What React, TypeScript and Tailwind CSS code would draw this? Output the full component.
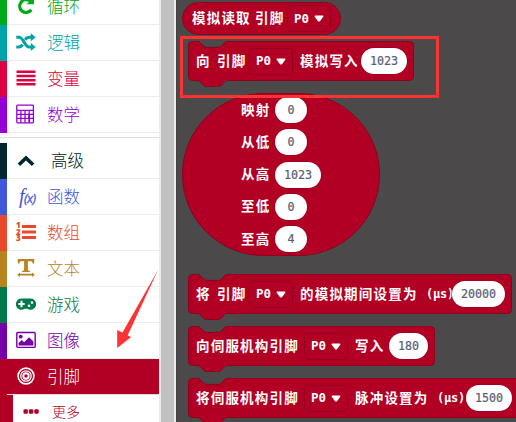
import React from "react";

const sans = "font-['Noto_Sans_CJK_SC',sans-serif]";
const mono = "font-['DejaVu_Sans_Mono','Noto_Sans_CJK_SC',monospace]";

const glyph = "block h-5 w-5 overflow-visible";

function LoopIcon() {
  return (
    <svg className={glyph} viewBox="0 0 20 20" fill="none" stroke="currentColor" strokeWidth="3.2">
      <path d="M15 6A6.400 6.400 0 1 0 15.300 13.800" />
      <path d="M18 .8v7.400h-7.400z" fill="currentColor" stroke="none" />
    </svg>
  );
}
function ShuffleIcon() {
  return (
    <svg className={glyph} viewBox="0 0 20 20" fill="none" stroke="currentColor" strokeWidth="3">
      <path d="M.3 5.200h2.500c5.300 0 5.500 9.800 10.500 9.800h3M.3 15h2.500c2 0 3-1.200 3.800-2.500M9.300 7.700c.8-1.500 2-2.500 4-2.500h3" />
      <path d="M14.800 1.200l4.900 4-4.900 4zM14.800 11l4.900 4-4.900 4z" fill="currentColor" stroke="none" />
    </svg>
  );
}
function LinesIcon() {
  return (
    <svg className={glyph} viewBox="0 0 20 20" fill="currentColor">
      <path d="M.5 2.500h19V5H.5zM.5 6.700h19v2.500H.5zM.5 10.900h19v2.500H.5zM.5 15h19v2.500H.5z" />
    </svg>
  );
}
function TableIcon() {
  return (
    <svg className={glyph} viewBox="0 0 20 20" fill="none" stroke="currentColor" strokeWidth="1.300">
      <rect x=".8" y="1.200" width="16.600" height="17.600" rx=".8" />
      <path d="M1 6.300h16.500M4.900 6.300v12.500M9 6.300v12.500M13.200 6.300v8M1 10.300h16.500M1 14.400h16.500" />
      <path d="M13.200 10.300v8.500" strokeWidth="1.800" />
    </svg>
  );
}
function ChevronIcon() {
  return (
    <svg className={glyph} viewBox="0 0 20 20" fill="none" stroke="currentColor" strokeWidth="3.600">
      <path d="M2.900 14.800L10 8l7.100 6.800" />
    </svg>
  );
}
function FunctionIcon() {
  return (
    <span className="flex h-5 w-5 items-baseline font-['Open_Sans',sans-serif] italic leading-5 whitespace-nowrap">
      <span className="ml-[3px] w-[5px] font-['Liberation_Serif',serif] text-[20px]">f</span>
      <span className="text-[12.500px] tracking-[-0.500px] [-webkit-text-stroke:0.300px]">(x)</span>
    </span>
  );
}
function ListIcon() {
  return (
    <span className="flex h-5 w-5 items-center gap-[1px]">
      <span className="flex w-[5px] flex-col font-['Open_Sans',sans-serif] text-[8px] font-extrabold">
        <span className="h-[6.500px] leading-[6.500px]">1</span>
        <span className="h-[6.500px] leading-[6.500px]">2</span>
        <span className="h-[6.500px] leading-[6.500px]">3</span>
      </span>
      <svg className="h-5 w-[14px]" viewBox="0 0 14 20" fill="currentColor">
        <path d="M0 3h14v3H0zM0 8.500h14v3H0zM0 14h14v3H0z" />
      </svg>
    </span>
  );
}
function TextIcon() {
  return (
    <svg className={glyph} viewBox="0 0 20 20" fill="currentColor">
      <path d="M1.800 1h16.400v4.600h-1.500c-.2-1.800-.8-2.400-2.500-2.400h-2.300v8.300c0 1 .4 1.200 2 1.300v1.200H6.100v-1.200c1.600-.1 2-.3 2-1.300V3.200H5.800c-1.700 0-2.300.6-2.500 2.400H1.800z" />
      <path d="M4 15.800h12v-1.400l2.800 2.300L16 19v-1.400H4V19l-2.800-2.300L4 14.400z" />
    </svg>
  );
}
function GamepadIcon() {
  return (
    <svg className={glyph} viewBox="0 0 20 20">
      <path d="M5.600 4.600h8.800a5.600 5.600 0 1 1-3 10.200H8.600a5.600 5.600 0 1 1-3-10.200z" fill="currentColor" />
      <path d="M4.500 6.800h2v2.200h2.200v2H6.500v2.200h-2V11H2.300V9h2.200z" fill="white" />
      <circle cx="13" cy="11.700" r="1.300" fill="white" />
      <circle cx="16" cy="8.600" r="1.300" fill="white" />
    </svg>
  );
}
function ImageIcon() {
  return (
    <svg className={glyph} viewBox="0 0 20 20">
      <rect x=".8" y="2.500" width="18.400" height="14.900" rx="1" fill="none" stroke="currentColor" strokeWidth="1.400" />
      <circle cx="4.700" cy="6.700" r="1.900" fill="currentColor" />
      <path d="M2.600 15.600v-2.500l3.200-3.100 2.300 2.200 5-5 4.300 4.300v4.100z" fill="currentColor" />
    </svg>
  );
}
function TargetIcon() {
  return (
    <svg className={glyph} viewBox="0 0 20 20" fill="none" stroke="currentColor">
      <circle cx="10" cy="10" r="7.900" strokeWidth="1.600" />
      <circle cx="10" cy="10" r="5.200" strokeWidth="1.300" />
      <circle cx="10" cy="10" r="2.700" strokeWidth="1.900" />
    </svg>
  );
}

type Category = { name: string; Icon: () => React.JSX.Element; strip: string; ink: string; pad?: string };

const basic: Category[] = [
  { name: "循环", Icon: LoopIcon, strip: "bg-[#00aa18]", ink: "text-[#00aa18]" },
  { name: "逻辑", Icon: ShuffleIcon, strip: "bg-[#00a4a6]", ink: "text-[#00a4a6]" },
  { name: "变量", Icon: LinesIcon, strip: "bg-[#dc0040]", ink: "text-[#dc0040]" },
  { name: "数学", Icon: TableIcon, strip: "bg-[#9400d3]", ink: "text-[#9400d3]" },
];

const advanced: Category[] = [
  { name: "高级", Icon: ChevronIcon, strip: "bg-[#00272b]", ink: "text-[#00272b]", pad: "ml-[15px]" },
  { name: "函数", Icon: FunctionIcon, strip: "bg-[#3f57d9]", ink: "text-[#3f57d9]" },
  { name: "数组", Icon: ListIcon, strip: "bg-[#e8492b]", ink: "text-[#e8492b]" },
  { name: "文本", Icon: TextIcon, strip: "bg-[#b8841f]", ink: "text-[#b8841f]" },
  { name: "游戏", Icon: GamepadIcon, strip: "bg-[#007a4b]", ink: "text-[#007a4b]" },
  { name: "图像", Icon: ImageIcon, strip: "bg-[#7600a8]", ink: "text-[#7600a8]" },
];

function CategoryRow({ name, Icon, strip, ink, pad = "ml-[11px]" }: Category) {
  return (
    <div className="flex h-9 shrink-0">
      <div className={`w-[7px] ${strip}`} />
      <div className={`flex flex-1 items-center border-b border-[#e9eeee] pb-px pl-[9px] ${ink}`}>
        <Icon />
        <span className={`${pad} pb-px text-[16.500px] font-light leading-5`}>{name}</span>
      </div>
    </div>
  );
}

function Sidebar() {
  return (
    <nav className={`flex h-[422px] w-[159px] shrink-0 flex-col overflow-hidden bg-white ${sans}`}>
      <div className="-mt-[11px] flex shrink-0 flex-col">
        {basic.map((c) => (
          <CategoryRow key={c.name} {...c} />
        ))}
      </div>
      <div className="h-[5px] shrink-0 border-b border-[#dedede]" />
      <div className="mt-[5px] flex shrink-0 flex-col">
        {advanced.map((c) => (
          <CategoryRow key={c.name} {...c} />
        ))}
      </div>
      <div className="flex h-[35px] shrink-0 items-center bg-[#b20024] pb-px pl-4 text-white">
        <TargetIcon />
        <span className="ml-[11px] pb-px text-[16.500px] font-light leading-5">引脚</span>
      </div>
      <div className="flex h-9 shrink-0">
        <div className="w-[7px] bg-[#b20024]" />
        <div className="flex flex-1 border-t border-[#d9d9d9] text-[#b20024]">
          <div className="w-[6px] bg-[#b20024]" />
          <svg className="ml-[10px] mt-[14px] h-[5px] w-4" viewBox="0 0 16 5" fill="currentColor">
            <rect x=".5" y=".3" width="4.400" height="4.400" rx="1.200" />
            <rect x="5.900" y=".3" width="4.400" height="4.400" rx="1.200" />
            <rect x="11.300" y=".3" width="4.400" height="4.400" rx="1.200" />
          </svg>
          <span className="ml-[13px] mt-[6px] text-[14px] font-light leading-5">更多</span>
        </div>
      </div>
    </nav>
  );
}

function Label({ children, className }: { children: string; className: string }) {
  return (
    <span className={`shrink-0 whitespace-nowrap pb-px text-[13.500px] font-bold leading-5 tracking-[1.200px] text-white ${className}`}>
      {children}
    </span>
  );
}

function Unit({ className }: { className: string }) {
  return (
    <span className={`shrink-0 whitespace-nowrap text-[12px] font-bold leading-5 tracking-[-0.200px] text-white ${className}`}>(µs)</span>
  );
}

function Dropdown({ className = "" }: { className?: string }) {
  return (
    <span className={`flex h-[27px] w-[44px] shrink-0 items-center rounded-[4px] border border-[#96001e] pl-[6px] text-white ${className}`}>
      <span className="w-[15px] text-[12.500px] font-bold leading-5">P0</span>
      <svg className="ml-[5px] h-[7px] w-[10px]" viewBox="0 0 10 7" fill="currentColor">
        <path d="M1.500.4h7q1.600.2.600 1.600L6.100 5.900Q5 7.200 3.900 5.900L.9 2Q-.1.600 1.500.4z" />
      </svg>
    </span>
  );
}

function Value({ children, className }: { children: string; className: string }) {
  return (
    <span className={`flex h-[26px] shrink-0 items-center justify-center rounded-full bg-white text-[11.700px] leading-5 text-[#575e75] ring-[0.500px] ring-[#8e001d] [-webkit-text-stroke:0.200px] ${className}`}>
      {children}
    </span>
  );
}

function Statement({ width, className = "", children }: { width: number; className?: string; children: React.ReactNode }) {
  const w = width - 0.5;
  const outline = `M.5 4.500q0-4 4-4h5q1.500 0 2.700 1.200l3.500 3.500q1.200 1.200 2.700 1.200h12q1.500 0 2.700-1.200l3.500-3.500q1.200-1.200 2.700-1.200H${w - 4}q4 0 4 4V35.500q0 4-4 4H39.300q-1.500 0-2.700 1.200l-3.500 3.500q-1.200 1.200-2.700 1.200h-12q-1.500 0-2.700-1.200l-3.500-3.500q-1.200-1.200-2.700-1.200h-5q-4 0-4-4z`;
  return (
    <div className={`relative ml-[6px] h-[40px] shrink-0 ${className}`} style={{ width }}>
      <svg className="absolute inset-0 h-[46px] w-full overflow-visible" fill="#b20024" stroke="#8e001d">
        <path d={outline} />
      </svg>
      <div className="relative flex h-[40px] items-center">{children}</div>
    </div>
  );
}

const mapping = [
  ["映射", "0"],
  ["从低", "0"],
  ["从高", "1023"],
  ["至低", "0"],
  ["至高", "4"],
];

function Canvas() {
  return (
    <main className={`relative flex h-[422px] w-[340px] shrink-0 flex-col overflow-hidden border-l border-[#424040] bg-[#4b4949] pl-[5px] ${mono}`}>
      <div className="mt-[2px] flex h-[33px] w-[159px] shrink-0 items-center rounded-full border border-[#8e001d] bg-[#b20024]">
        <Label className="ml-[9px] w-[63px]">模拟读取</Label>
        <Label className="w-[32px]">引脚</Label>
        <Dropdown />
      </div>

      <Statement width={226} className="mt-[6px]">
        <Label className="ml-[8px] w-[21px]">向</Label>
        <Label className="w-[32px]">引脚</Label>
        <Dropdown />
        <Label className="ml-[7px] w-[61px]">模拟写入</Label>
        <Value className="w-[46px]">1023</Value>
      </Statement>

      <div className="mt-[12px] flex h-[163px] w-[198px] shrink-0 flex-col gap-[6.300px] rounded-[81.500px] border border-[#8e001d] bg-[#b20024] pt-[3px]">
        {mapping.map(([label, value]) => (
          <div key={label} className="flex h-[26px] items-center pl-[58px]">
            <Label className="w-[34px]">{label}</Label>
            <Value className={value.length > 1 ? "w-[46px]" : "w-[32px]"}>{value}</Value>
          </div>
        ))}
      </div>

      <Statement width={324} className="mt-[18px]">
        <Label className="ml-[8px] w-[21px]">将</Label>
        <Label className="w-[32px]">引脚</Label>
        <Dropdown />
        <Label className="ml-[7px] w-[126px]">的模拟期间设置为</Label>
        <Unit className="w-[26px]" />
        <Value className="w-[53px]">20000</Value>
      </Statement>

      <Statement width={247} className="mt-[12px]">
        <Label className="ml-[8px] w-[108px]">向伺服机构引脚</Label>
        <Dropdown />
        <Label className="ml-[7px] w-[34px]">写入</Label>
        <Value className="w-[39px]">180</Value>
      </Statement>

      <Statement width={337} className="mt-[12px]">
        <Label className="ml-[8px] w-[108px]">将伺服机构引脚</Label>
        <Dropdown />
        <Label className="ml-[7px] w-[82px]">脉冲设置为</Label>
        <Unit className="w-[29px]" />
        <Value className="w-[46px]">1500</Value>
      </Statement>

      <div className="absolute left-[3px] top-[36px] h-[62px] w-[259px] border-[3px] border-[#ff3333]" />
    </main>
  );
}

export default function App() {
  return (
    <div className="relative flex h-[422px] w-[516px] overflow-hidden bg-white">
      <Sidebar />
      <div className="h-full w-[17px] shrink-0 border-x-2 border-[#ececec] bg-[#c1c1c1]" />
      <Canvas />
      <svg className="pointer-events-none absolute left-[116px] top-[270px] h-[80px] w-[43px]" viewBox="0 0 43 80" fill="#ff3333">
        <path d="M42 0L11.700 65.300l3.200 2L1.200 78V60l5.300 2.600z" />
      </svg>
    </div>
  );
}
